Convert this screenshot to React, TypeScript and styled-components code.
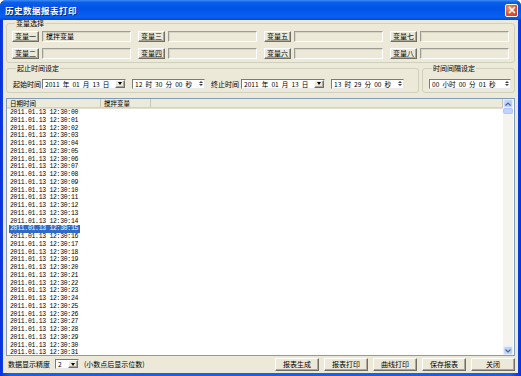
import styled, { createGlobalStyle, css } from 'styled-components';

const GlobalStyle = createGlobalStyle`
  html, body {
    margin: 0;
    padding: 0;
    overflow: hidden;
    background: #ffffff;
  }
  * {
    box-sizing: border-box;
  }
`;

const cjk = `"Noto Sans CJK SC", "Liberation Sans", sans-serif`;

const Window = styled.div`
  width: 521px;
  height: 376px;
  display: flex;
  flex-direction: column;
  padding: 0 3px 3px 3px;
  border-radius: 6px 6px 0 0;
  background: linear-gradient(90deg, #0831d9 0%, #1660f0 2%, #1660f0 98%, #0831d9 100%);
  font-family: ${cjk};
  color: #000000;
`;

const TitleBar = styled.div`
  height: 20px;
  flex: none;
  display: flex;
  align-items: center;
  justify-content: space-between;
  margin: 0 -3px;
  padding-left: 5px;
  padding-right: 3px;
  border-radius: 6px 6px 0 0;
  background: linear-gradient(180deg, #3d8cf7 0%, #0a5ee8 12%, #0053e6 45%, #0a60f0 85%, #0048d8 100%);
`;

const Title = styled.span`
  font-size: 8.5px;
  font-weight: 700;
  color: #ffffff;
  letter-spacing: 0.5px;
  text-shadow: 1px 1px 0 #0a2a80;
`;

const CloseButton = styled.div`
  width: 13px;
  height: 13px;
  border: 1px solid #ffffff;
  border-radius: 2px;
  background: radial-gradient(circle at 35% 30%, #f39a7c 0%, #e0532d 55%, #c4391a 100%);
  display: flex;
  align-items: center;
  justify-content: center;
`;

const Body = styled.div`
  flex: 1;
  display: flex;
  flex-direction: column;
  background: #ece9d8;
  padding: 0 3px;
`;

const Group = styled.fieldset`
  margin: 0;
  min-width: 0;
  border: 1px solid #d0d0bf;
  border-radius: 3px;
`;

const Legend = styled.legend`
  font-size: 7px;
  line-height: 7px;
  padding: 0 1px;
  margin-left: 3px;
  white-space: nowrap;
`;

const VarGroup = styled(Group)`
  padding: 4px 4px 3px 5px;
  display: grid;
  grid-template-columns: repeat(4, 119px);
  column-gap: 7px;
  row-gap: 6px;
`;

const VarCell = styled.div`
  display: flex;
  gap: 3px;
  height: 11px;
`;

const raised = css`
  border: 1px solid;
  border-color: #ffffff #716f64 #716f64 #ffffff;
  box-shadow: inset -1px -1px 0 #aca899;
  background: #ece9d8;
`;

const VarButton = styled.div`
  ${raised}
  width: 27px;
  flex: none;
  font-size: 7px;
  line-height: 9px;
  text-align: center;
`;

const VarField = styled.div`
  flex: 1;
  border: 1px solid;
  border-color: #9d9d93 #ffffff #ffffff #9d9d93;
  box-shadow: inset 1px 1px 0 #d8d5c4;
  font-size: 7px;
  line-height: 9px;
  padding-left: 3px;
`;

const TimeRow = styled.div`
  display: flex;
  gap: 3px;
  margin-top: 2px;
`;

const TimeGroup = styled(Group)<{ width: number }>`
  width: ${({ width }) => width}px;
  flex: none;
  padding: 6px 4px 3px 6px;
  display: flex;
  align-items: center;
  height: 28px;
`;

const FieldLabel = styled.span<{ gap: number }>`
  font-size: 7px;
  line-height: 10px;
  white-space: nowrap;
  flex: none;
  margin-right: ${({ gap }) => gap}px;
`;

const sunken = css`
  border: 1px solid;
  border-color: #7a7a7a #e8e8e8 #e8e8e8 #7a7a7a;
  background: #ffffff;
`;

const Picker = styled.div<{ width: number; after: number }>`
  ${sunken}
  width: ${({ width }) => width}px;
  margin-right: ${({ after }) => after}px;
  height: 10px;
  flex: none;
  display: flex;
  align-items: stretch;
`;

const PickerText = styled.span`
  flex: 1;
  font-size: 6.6px;
  line-height: 8px;
  padding-left: 2px;
  word-spacing: 1.6px;
  white-space: pre;
  overflow: hidden;
`;

const DropButton = styled.div`
  ${raised}
  width: 10px;
  flex: none;
  display: flex;
  align-items: center;
  justify-content: center;
`;

const SpinBox = styled.div`
  width: 7px;
  flex: none;
  display: flex;
  flex-direction: column;
  align-items: center;
  justify-content: center;
  gap: 1px;
`;

const Triangle = styled.div<{ dir: 'up' | 'down' }>`
  width: 0;
  height: 0;
  border-left: 2px solid transparent;
  border-right: 2px solid transparent;
  ${({ dir }) => dir === 'up'
    ? css`border-bottom: 2px solid #404040;`
    : css`border-top: 2px solid #404040;`}
`;

const DropArrow = styled.div`
  width: 0;
  height: 0;
  border-left: 2.5px solid transparent;
  border-right: 2.5px solid transparent;
  border-top: 3px solid #000000;
`;

const ListView = styled.div`
  margin-top: 5px;
  height: 258px;
  flex: none;
  border: 1px solid #7f9db9;
  background: #ffffff;
  display: flex;
  overflow: hidden;
`;

const ListContent = styled.div`
  flex: 1;
  display: flex;
  flex-direction: column;
`;

const Header = styled.div`
  height: 9px;
  flex: none;
  display: flex;
  background: #ebeadb;
  border-bottom: 1px solid #d6d2c2;
  box-shadow: 0 1px 0 #e2dfd0;
`;

const HeaderCell = styled.div<{ width?: number }>`
  ${({ width }) => width ? css`width: ${width}px; flex: none;` : css`flex: 1;`}
  font-size: 6.5px;
  line-height: 9px;
  padding-left: 3px;
  border-right: 1px solid #c7c5b2;
  white-space: nowrap;
`;

const Rows = styled.div`
  padding-top: 1px;
  padding-left: 2px;
`;

const Row = styled.div<{ selected: boolean }>`
  height: 7.75px;
  line-height: 7.75px;
  width: 71px;
  padding-left: 1px;
  font-family: "Liberation Mono", "DejaVu Sans Mono", monospace;
  font-size: 6.4px;
  letter-spacing: -0.25px;
  white-space: pre;
  ${({ selected }) => selected && css`
    background: #316ac5;
    color: #ffffff;
  `}
`;

const ScrollBar = styled.div`
  width: 10px;
  flex: none;
  margin-right: 1px;
  display: flex;
  flex-direction: column;
  background: #f4f3ee;
`;

const ScrollButton = styled.div`
  height: 9px;
  flex: none;
  border-radius: 2px;
  background: linear-gradient(90deg, #c7d8fb 0%, #b9cdf8 100%);
  border: 1px solid #e6eefc;
  display: flex;
  align-items: center;
  justify-content: center;
`;

const ScrollThumb = styled.div`
  height: 6px;
  flex: none;
  border-radius: 2px;
  background: #c1d3fb;
  border: 1px solid #b0c6f4;
`;

const ScrollTrack = styled.div`
  flex: 1;
`;

const BottomBar = styled.div`
  flex: 1;
  display: flex;
  align-items: center;
  padding: 0 0 1px 2px;
`;

const BottomLabel = styled.span<{ gap: number }>`
  font-size: 7px;
  line-height: 10px;
  flex: none;
  white-space: nowrap;
  margin-right: ${({ gap }) => gap}px;
`;

const Select = styled.div`
  ${sunken}
  width: 24px;
  height: 10px;
  flex: none;
  display: flex;
  margin-right: 5px;
`;

const SelectText = styled.span`
  flex: 1;
  font-size: 6.6px;
  line-height: 8px;
  padding-left: 2px;
`;

const Spacer = styled.div`
  flex: 1;
`;

const ActionButton = styled.div`
  ${raised}
  width: 44px;
  height: 13px;
  flex: none;
  margin-left: 5px;
  font-size: 7px;
  line-height: 11px;
  text-align: center;
`;

const variables = [
  ['变量一', '搅拌变量'],
  ['变量三', ''],
  ['变量五', ''],
  ['变量七', ''],
  ['变量二', ''],
  ['变量四', ''],
  ['变量六', ''],
  ['变量八', ''],
];

const rows = Array.from({ length: 32 }, (_, i) => `2011.01.13 12:30:${String(i).padStart(2, '0')}`);

function Spinner() {
  return (
    <SpinBox>
      <Triangle dir="up" />
      <Triangle dir="down" />
    </SpinBox>
  );
}

export default function App() {
  return (
    <>
      <GlobalStyle />
      <Window>
        <TitleBar>
          <Title>历史数据报表打印</Title>
          <CloseButton>
            <svg width="8" height="8" viewBox="0 0 8 8">
              <path d="M1 1 L7 7 M7 1 L1 7" stroke="#ffffff" strokeWidth="1.6" />
            </svg>
          </CloseButton>
        </TitleBar>
        <Body>
          <VarGroup>
            <Legend>变量选择</Legend>
            {variables.map(([label, value]) => (
              <VarCell key={label}>
                <VarButton>{label}</VarButton>
                <VarField>{value}</VarField>
              </VarCell>
            ))}
          </VarGroup>

          <TimeRow>
            <TimeGroup width={413}>
              <Legend>起止时间设定</Legend>
              <FieldLabel gap={1}>起始时间</FieldLabel>
              <Picker width={84} after={6}>
                <PickerText>2011 年 01 月 13 日</PickerText>
                <DropButton><DropArrow /></DropButton>
              </Picker>
              <Picker width={73} after={6}>
                <PickerText>12 时 30 分 00 秒</PickerText>
                <Spinner />
              </Picker>
              <FieldLabel gap={2}>终止时间</FieldLabel>
              <Picker width={84} after={6}>
                <PickerText>2011 年 01 月 13 日</PickerText>
                <DropButton><DropArrow /></DropButton>
              </Picker>
              <Picker width={73} after={0}>
                <PickerText>13 时 29 分 00 秒</PickerText>
                <Spinner />
              </Picker>
            </TimeGroup>
            <TimeGroup width={93}>
              <Legend>时间间隔设定</Legend>
              <Picker width={82} after={0}>
                <PickerText>00 小时 00 分 01 秒</PickerText>
                <Spinner />
              </Picker>
            </TimeGroup>
          </TimeRow>

          <ListView>
            <ListContent>
              <Header>
                <HeaderCell width={94}>日期时间</HeaderCell>
                <HeaderCell width={50}>搅拌变量</HeaderCell>
                <HeaderCell />
              </Header>
              <Rows>
                {rows.map((row, i) => (
                  <Row key={row} selected={i === 15}>{row}</Row>
                ))}
              </Rows>
            </ListContent>
            <ScrollBar>
              <ScrollButton>
                <svg width="6" height="4" viewBox="0 0 6 4">
                  <path d="M0.5 3.5 L3 1 L5.5 3.5" stroke="#4d6185" strokeWidth="1.2" fill="none" />
                </svg>
              </ScrollButton>
              <ScrollThumb />
              <ScrollTrack />
              <ScrollButton>
                <svg width="6" height="4" viewBox="0 0 6 4">
                  <path d="M0.5 0.5 L3 3 L5.5 0.5" stroke="#4d6185" strokeWidth="1.2" fill="none" />
                </svg>
              </ScrollButton>
            </ScrollBar>
          </ListView>

          <BottomBar>
            <BottomLabel gap={5}>数据显示精度</BottomLabel>
            <Select>
              <SelectText>2</SelectText>
              <DropButton><DropArrow /></DropButton>
            </Select>
            <BottomLabel gap={0}>(小数点后显示位数)</BottomLabel>
            <Spacer />
            <ActionButton>报表生成</ActionButton>
            <ActionButton>报表打印</ActionButton>
            <ActionButton>曲线打印</ActionButton>
            <ActionButton>保存报表</ActionButton>
            <ActionButton>关闭</ActionButton>
          </BottomBar>
        </Body>
      </Window>
    </>
  );
}
